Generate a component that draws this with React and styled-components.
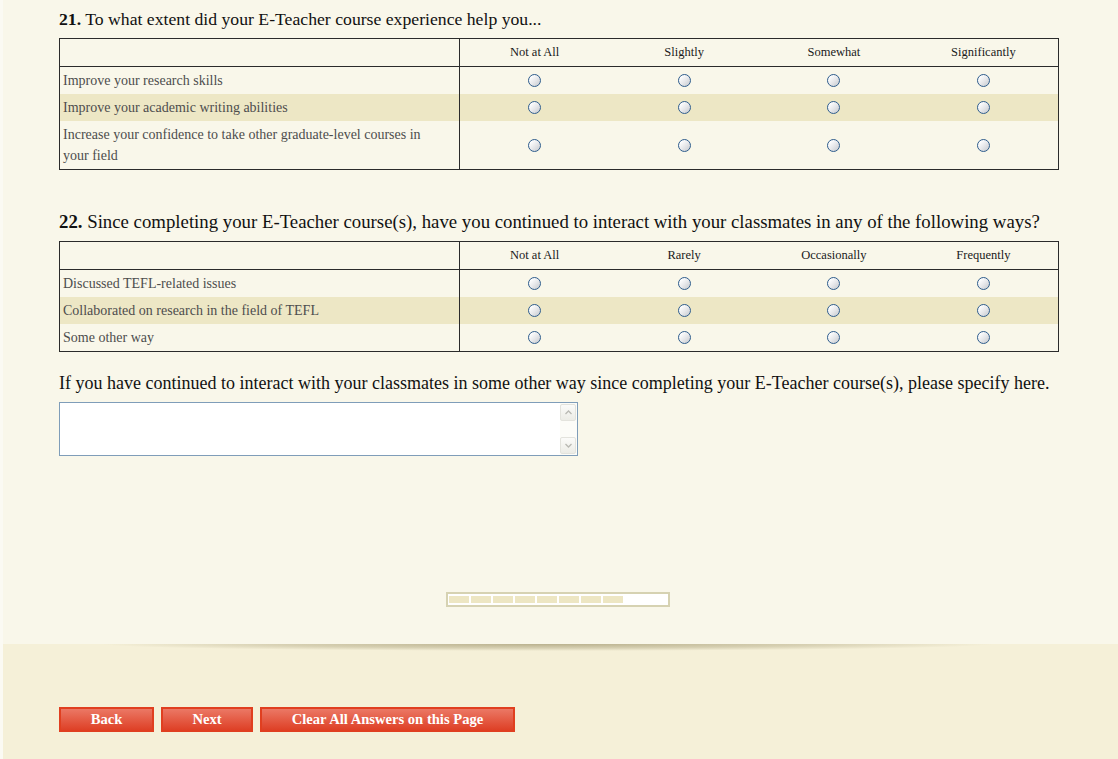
import styled, { createGlobalStyle } from "styled-components";

const GlobalStyle = createGlobalStyle`
  html, body {
    margin: 0;
    padding: 0;
    background: #fbfaf3;
    font-family: "Liberation Serif", "Times New Roman", serif;
  }
`;

const q21 = {
  number: "21.",
  title: "To what extent did your E-Teacher course experience help you...",
  size: 17.7,
  scale: ["Not at All", "Slightly", "Somewhat", "Significantly"],
  rows: [
    "Improve your research skills",
    "Improve your academic writing abilities",
    "Increase your confidence to take other graduate-level courses in your field",
  ],
};

const q22 = {
  number: "22.",
  title:
    "Since completing your E-Teacher course(s), have you continued to interact with your classmates in any of the following ways?",
  size: 18.8,
  scale: ["Not at All", "Rarely", "Occasionally", "Frequently"],
  rows: [
    "Discussed TEFL-related issues",
    "Collaborated on research in the field of TEFL",
    "Some other way",
  ],
};

const Matrix = ({ q, gap }) => (
  <>
    <Question $gap={gap} $size={q.size}>
      <strong>{q.number}</strong> {q.title}
    </Question>
    <Grid>
      <thead>
        <tr>
          <LabelHead />
          {q.scale.map((s) => (
            <ColHead key={s}>{s}</ColHead>
          ))}
        </tr>
      </thead>
      <tbody>
        {q.rows.map((r, i) => (
          <Row key={r} $alt={i % 2 === 1}>
            <Label>{r}</Label>
            {q.scale.map((s) => (
              <Cell key={s}>
                <Radio type="radio" name={q.number + i} />
              </Cell>
            ))}
          </Row>
        ))}
      </tbody>
    </Grid>
  </>
);

const Chevron = ({ up }) => (
  <svg width="7" height="5" viewBox="0 0 7 5">
    <path
      d={up ? "M0.5 4 L3.5 1 L6.5 4" : "M0.5 1 L3.5 4 L6.5 1"}
      fill="none"
      stroke="#b9b9b3"
      strokeWidth="1.3"
    />
  </svg>
);

export default function App() {
  return (
    <>
      <GlobalStyle />
      <Page>
        <Main>
          <Content>
            <Matrix q={q21} gap={9} />
            <Matrix q={q22} gap={43} />
            <Prompt>
              If you have continued to interact with your classmates in some other
              way since completing your E-Teacher course(s), please specify here.
            </Prompt>
            <TextBox>
              <Area />
              <ScrollBar>
                <ScrollBtn>
                  <Chevron up />
                </ScrollBtn>
                <ScrollBtn>
                  <Chevron />
                </ScrollBtn>
              </ScrollBar>
            </TextBox>
          </Content>
          <ProgressRow>
            <Progress>
              {Array.from({ length: 8 }).map((_, i) => (
                <Segment key={i} />
              ))}
            </Progress>
          </ProgressRow>
        </Main>
        <Footer>
          <Shadow />
          <Buttons>
            <NavButton $w={95}>Back</NavButton>
            <NavButton $w={92}>Next</NavButton>
            <NavButton $w={255}>Clear All Answers on this Page</NavButton>
          </Buttons>
        </Footer>
      </Page>
    </>
  );
}

const Page = styled.div`
  margin-left: 3px;
  width: 1115px;
`;

const Main = styled.main`
  background: #f9f7ea;
  height: 644px;
  box-sizing: border-box;
  padding-top: 1px;
`;

const Content = styled.div`
  padding-left: 56px;
  width: 1000px;
`;

const Question = styled.h2`
  margin: ${(p) => p.$gap - 1}px 0 9px;
  font-size: ${(p) => p.$size}px;
  line-height: 20px;
  font-weight: normal;
  color: #111;
  white-space: nowrap;
  strong {
    font-weight: bold;
  }
`;

const Grid = styled.table`
  width: 1000px;
  border-collapse: collapse;
  border: 1px solid #2b2b2b;
  table-layout: fixed;
`;

const LabelHead = styled.th`
  width: 397px;
  border-right: 1px solid #2b2b2b;
  border-bottom: 1px solid #2b2b2b;
`;

const ColHead = styled.th`
  font-size: 12.5px;
  font-weight: normal;
  color: #1a1a1a;
  line-height: 21px;
  padding: 3px 0;
  text-align: center;
  border-bottom: 1px solid #2b2b2b;
`;

const Row = styled.tr`
  background: ${(p) => (p.$alt ? "#ede7c5" : "transparent")};
`;

const Label = styled.td`
  font-size: 14px;
  line-height: 21px;
  color: #4d4d4d;
  padding: 3px 24px 3px 3px;
  border-right: 1px solid #2b2b2b;
`;

const Cell = styled.td`
  text-align: center;
  padding: 0;
  line-height: 0;
`;

const Radio = styled.input`
  appearance: none;
  margin: 0;
  width: 13px;
  height: 13px;
  border-radius: 50%;
  border: 1px solid #2f5d8c;
  box-sizing: border-box;
  background: linear-gradient(135deg, #ffffff 15%, #e6e7ea 55%, #c4c8cd 100%);
  vertical-align: middle;
`;

const Prompt = styled.p`
  margin: 21px 0 9px;
  font-size: 18px;
  line-height: 20px;
  color: #111;
  white-space: nowrap;
`;

const TextBox = styled.div`
  display: flex;
  width: 519px;
  height: 54px;
  box-sizing: border-box;
  border: 1px solid #7f9db9;
  background: #fff;
`;

const Area = styled.textarea`
  flex: 1;
  border: none;
  outline: none;
  resize: none;
  background: transparent;
  font-family: "Liberation Serif", serif;
`;

const ScrollBar = styled.div`
  width: 16px;
  display: flex;
  flex-direction: column;
  justify-content: space-between;
  background: #fcfcf8;
  padding: 1px 1px 1px 0;
`;

const ScrollBtn = styled.div`
  height: 15px;
  display: flex;
  align-items: center;
  justify-content: center;
  border: 1px solid #e3e3dd;
  border-radius: 2px;
  background: linear-gradient(#fbfbf9, #ecece6);
`;

const ProgressRow = styled.div`
  display: flex;
  justify-content: center;
  padding-right: 5px;
  margin-top: 136px;
`;

const Progress = styled.div`
  width: 224px;
  height: 15px;
  box-sizing: border-box;
  border: 2px solid #d6d2b2;
  background: #fff;
  padding: 2px 1px;
  display: flex;
  gap: 2px;
`;

const Segment = styled.div`
  width: 20px;
  height: 7px;
  background: #ede6c3;
`;

const Footer = styled.footer`
  background: #f5f0d8;
  height: 115px;
`;

const Shadow = styled.div`
  margin-left: 97px;
  width: 893px;
  height: 7px;
  background: radial-gradient(
    ellipse 50% 100% at 50% 0%,
    rgba(160, 150, 110, 0.7) 0%,
    rgba(160, 150, 110, 0.35) 60%,
    rgba(160, 150, 110, 0) 100%
  );
`;

const Buttons = styled.div`
  display: flex;
  gap: 7px;
  padding-left: 56px;
  margin-top: 56px;
`;

const NavButton = styled.button`
  width: ${(p) => p.$w}px;
  height: 25px;
  box-sizing: border-box;
  border: 2px solid #e03f20;
  background: linear-gradient(#eb7865, #de4026);
  color: #fff;
  font-family: "Liberation Serif", "Times New Roman", serif;
  font-weight: bold;
  font-size: 14.6px;
  padding: 0;
  cursor: pointer;
`;
